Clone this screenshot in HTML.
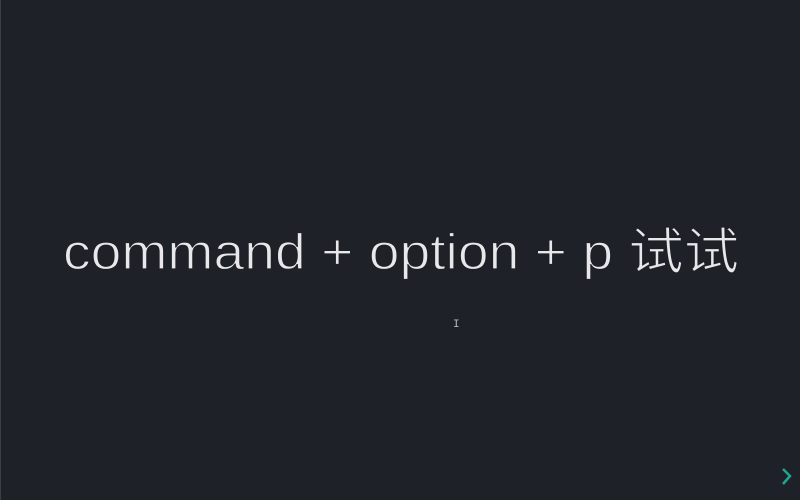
<!DOCTYPE html>
<html><head><style>
html,body{margin:0;padding:0;width:800px;height:500px;overflow:hidden;background:#1e2128;}
</style></head><body>
<svg width="800" height="500" style="position:absolute;left:0;top:0">
<rect x="0" y="0" width="800" height="500" fill="#1e2128"/>
<rect x="0" y="0" width="1" height="500" fill="#3a3e46"/>
<text x="63" y="269" font-family="Liberation Sans, Noto Sans CJK SC, sans-serif" font-size="50" fill="#e8e8ea" stroke="#1e2128" stroke-width="1.2" textLength="676" lengthAdjust="spacingAndGlyphs">command + option + p 试试</text>
<text x="453" y="327" font-family="Liberation Mono, monospace" font-size="11" fill="#bbb">I</text>
<path d="M783 469 L790 476 L783 484" stroke="#22a592" stroke-width="2.5" fill="none"/>
</svg>
</body></html>
